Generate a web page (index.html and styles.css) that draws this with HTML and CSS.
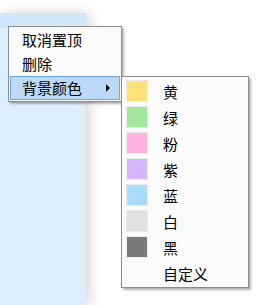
FILE: index.html
```html
<!DOCTYPE html>
<html lang="zh-CN">

<head>
    <meta charset="UTF-8">
    <meta name="viewport" content="width=device-width, initial-scale=1.0">
    <title>右键菜单</title>
    <link rel="stylesheet" href="styles.css">
</head>

<body>
    <div class="page">
        <div class="list">
            <div class="list_item active"></div>
        </div>
    </div>

    <!-- 右键菜单 -->
    <ul class="menu main_menu">
        <li>取消置顶</li>
        <li>删除</li>
        <li class="hover has_sub">背景颜色<span class="arrow"></span></li>
    </ul>

    <!-- 背景颜色子菜单 -->
    <ul class="menu sub_menu">
        <li><span class="swatch yellow"></span>黄</li>
        <li><span class="swatch green"></span>绿</li>
        <li><span class="swatch pink"></span>粉</li>
        <li><span class="swatch purple"></span>紫</li>
        <li><span class="swatch blue"></span>蓝</li>
        <li><span class="swatch white"></span>白</li>
        <li><span class="swatch black"></span>黑</li>
        <li><span class="swatch none"></span>自定义</li>
    </ul>
</body>

</html>
```

FILE: styles.css
```css
* {
    margin: 0;
    padding: 0;
    box-sizing: border-box;
}

body {
    width: 280px;
    height: 305px;
    background: #fff;
    font-family: "Noto Sans CJK SC", "Microsoft YaHei", sans-serif;
    font-size: 15px;
    color: #000;
    overflow: hidden;
}

.page {
    padding-top: 13px;
    height: 100%;
}

.list {
    width: 86px;
    height: 100%;
    background: #ddeefd;
    box-shadow: 4px 0 12px rgba(0, 0, 0, 0.16);
}

.list_item {
    height: 15px;
}

.list_item.active {
    background: #cfe6fb;
}

.menu {
    position: absolute;
    list-style: none;
    background: #fbfbfb;
    border: 1px solid #8c8c8c;
    box-shadow: 2px 2px 2px rgba(0, 0, 0, 0.3);
    padding: 1px;
}

.main_menu {
    left: 8px;
    top: 26px;
    width: 114px;
}

.main_menu li {
    position: relative;
    height: 24px;
    line-height: 22px;
    padding-left: 11px;
    border: 1px solid transparent;
}

.main_menu li.hover {
    background: #bcdaf7;
    border-color: #6fa7dc;
}

.arrow {
    position: absolute;
    right: 9px;
    top: 7px;
    width: 0;
    height: 0;
    border-top: 4px solid transparent;
    border-bottom: 4px solid transparent;
    border-left: 4px solid #000;
}

.sub_menu {
    left: 121px;
    top: 76px;
    width: 128px;
}

.sub_menu li {
    display: flex;
    align-items: center;
    height: 26px;
    padding-left: 4px;
}

.swatch {
    width: 20px;
    height: 20px;
    margin-right: 16px;
    box-shadow: 0 0 0 1px #ececec;
}

.swatch.none {
    box-shadow: none;
}

.yellow { background: #ffe17a; }
.green { background: #a2e89c; }
.pink { background: #ffb2e0; }
.purple { background: #d5b6fc; }
.blue { background: #a9dcfc; }
.white { background: #e0e0e0; }
.black { background: #7a7a7a; }
```
